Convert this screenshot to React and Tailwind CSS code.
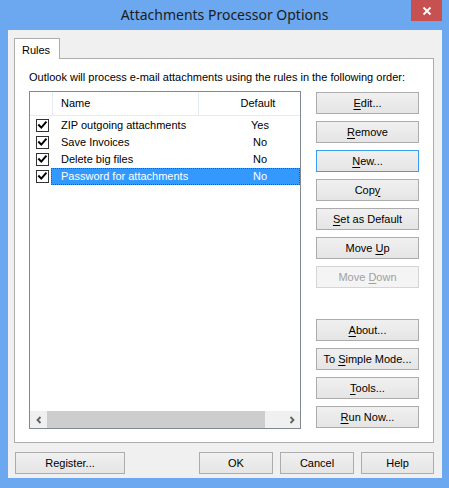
import React from "react";

const BODY = { fontFamily: '"Liberation Sans", Arial, sans-serif' };

// Windows-8 style push button; `m` marks the mnemonic letter index.
function Btn({ label, m = -1, w = "w-full", focused = false, disabled = false }) {
  const border = disabled
    ? "border-[#d5d5d5]"
    : focused
    ? "border-[#3c9df0]"
    : "border-[#acacac]";
  const bg = disabled
    ? "bg-[#f4f4f4]"
    : "bg-linear-to-b from-[#f0f0f0] to-[#e5e5e5]";
  const text = disabled ? "text-[#a0a0a0]" : "text-black";
  return (
    <div
      className={`${w} h-[22px] shrink-0 border ${border} ${bg} ${text} flex items-center justify-center text-[11px] leading-none`}
    >
      <span>
        {m < 0 ? (
          label
        ) : (
          <>
            {label.slice(0, m)}
            <span className="underline underline-offset-[2px] decoration-1">{label[m]}</span>
            {label.slice(m + 1)}
          </>
        )}
      </span>
    </div>
  );
}

function Check() {
  return (
    <div className="w-[13px] h-[13px] border border-[#333] bg-white flex items-center justify-center">
      <svg width="11" height="11" viewBox="0 0 11 11">
        <path d="M2 5.2 L4.3 7.6 L8.8 2.4" fill="none" stroke="#000" strokeWidth="2" strokeLinecap="square" />
      </svg>
    </div>
  );
}

const rows = [
  { name: "ZIP outgoing attachments", def: "Yes" },
  { name: "Save Invoices", def: "No" },
  { name: "Delete big files", def: "No" },
  { name: "Password for attachments", def: "No", sel: true },
];

export default function App() {
  return (
    <div className="w-[449px] h-[488px] bg-[#6ba8ef] flex flex-col overflow-hidden" style={BODY}>
      {/* title bar */}
      <div className="relative h-[30px] shrink-0 flex items-center justify-center">
        <span
          className="text-[14px] text-[#1c1c1c] pb-[1px]"
          style={{ fontFamily: '"Noto Sans", "Open Sans", sans-serif' }}
        >
          Attachments Processor Options
        </span>
        <div className="absolute left-[411px] top-0 w-[31px] h-[21px] bg-[#c75050] flex items-center justify-center">
          <svg width="10" height="10" viewBox="0 0 10 10">
            <path d="M1.5 1.5 L8.5 8.5 M8.5 1.5 L1.5 8.5" stroke="#fff" strokeWidth="1.8" />
          </svg>
        </div>
      </div>

      {/* client area */}
      <div className="ml-[8px] w-[434px] h-[448px] bg-[#f0f0f0] flex flex-col pl-[6px] pt-[8px]">
        {/* tab strip */}
        <div className="flex">
          <div className="w-[46px] h-[21px] -mb-px bg-white border border-b-0 border-[#adadad] relative z-10 flex items-start pl-[7px] pt-[3px] text-[11px]">
            Rules
          </div>
        </div>

        {/* tab page */}
        <div className="w-[420px] h-[385px] bg-white border border-[#adadad] flex flex-col pl-[14px] pr-[13px]">
          <div className="h-[32px] flex items-center pt-[5px] text-[11px] text-black whitespace-nowrap">
            Outlook will process e-mail attachments using the rules in the following order:
          </div>

          <div className="flex gap-[15px]">
            {/* rules list */}
            <div className="w-[272px] h-[338px] shrink-0 border border-[#828790] bg-white flex flex-col overflow-hidden">
              <div className="h-[24px] shrink-0 flex border-b border-[#e3ebf5] text-[11px]">
                <div className="w-[23px] shrink-0 border-r border-[#e3ebf5]" />
                <div className="w-[146px] shrink-0 border-r border-[#e3ebf5] flex items-center pl-[8px]">Name</div>
                <div className="w-[118px] shrink-0 flex items-center justify-center">Default</div>
              </div>
              <div className="flex-1 flex flex-col pt-[1px]">
                {rows.map((r) => (
                  <div key={r.name} className="h-[17px] flex items-center text-[11px]">
                    <div className="w-[21px] shrink-0 flex justify-end pr-[2px]">
                      <Check />
                    </div>
                    <div
                      className={`flex-1 h-full flex items-center overflow-hidden ${
                        r.sel ? "bg-[#3399ff] text-white outline-1 outline-dotted outline-[#1a5fa8] -outline-offset-1" : ""
                      }`}
                    >
                      <div className="w-[150px] shrink-0 pl-[10px] whitespace-nowrap">{r.name}</div>
                      <div className="w-[118px] shrink-0 flex justify-center">{r.def}</div>
                    </div>
                  </div>
                ))}
              </div>
              {/* horizontal scrollbar */}
              <div className="h-[17px] shrink-0 bg-[#f0f0f0] flex">
                <div className="w-[17px] flex items-center justify-center">
                  <svg width="8" height="8" viewBox="0 0 8 8">
                    <path d="M5.5 1 L2.5 4 L5.5 7" fill="none" stroke="#606060" strokeWidth="1.8" />
                  </svg>
                </div>
                <div className="w-[218px] bg-[#cdcdcd]" />
                <div className="flex-1" />
                <div className="w-[17px] flex items-center justify-center">
                  <svg width="8" height="8" viewBox="0 0 8 8">
                    <path d="M2.5 1 L5.5 4 L2.5 7" fill="none" stroke="#606060" strokeWidth="1.8" />
                  </svg>
                </div>
              </div>
            </div>

            {/* action buttons */}
            <div className="w-[103px] h-[338px] pt-[1px] flex flex-col justify-between">
              <div className="flex flex-col gap-[7px]">
                <Btn label="Edit..." m={0} />
                <Btn label="Remove" m={0} />
                <Btn label="New..." m={0} focused />
                <Btn label="Copy" m={3} />
                <Btn label="Set as Default" m={0} />
                <Btn label="Move Up" m={5} />
                <Btn label="Move Down" m={5} disabled />
              </div>
              <div className="flex flex-col gap-[7px] pb-[1px]">
                <Btn label="About..." m={0} />
                <Btn label="To Simple Mode..." m={3} />
                <Btn label="Tools..." m={0} />
                <Btn label="Run Now..." m={0} />
              </div>
            </div>
          </div>
        </div>

        {/* dialog buttons */}
        <div className="flex mt-[9px] pl-[1px]">
          <Btn label="Register..." w="w-[110px]" />
          <div className="w-[74px]" />
          <div className="flex gap-[7px]">
            <Btn label="OK" w="w-[74px]" />
            <Btn label="Cancel" w="w-[74px]" />
            <Btn label="Help" w="w-[73px]" />
          </div>
        </div>
      </div>
    </div>
  );
}
